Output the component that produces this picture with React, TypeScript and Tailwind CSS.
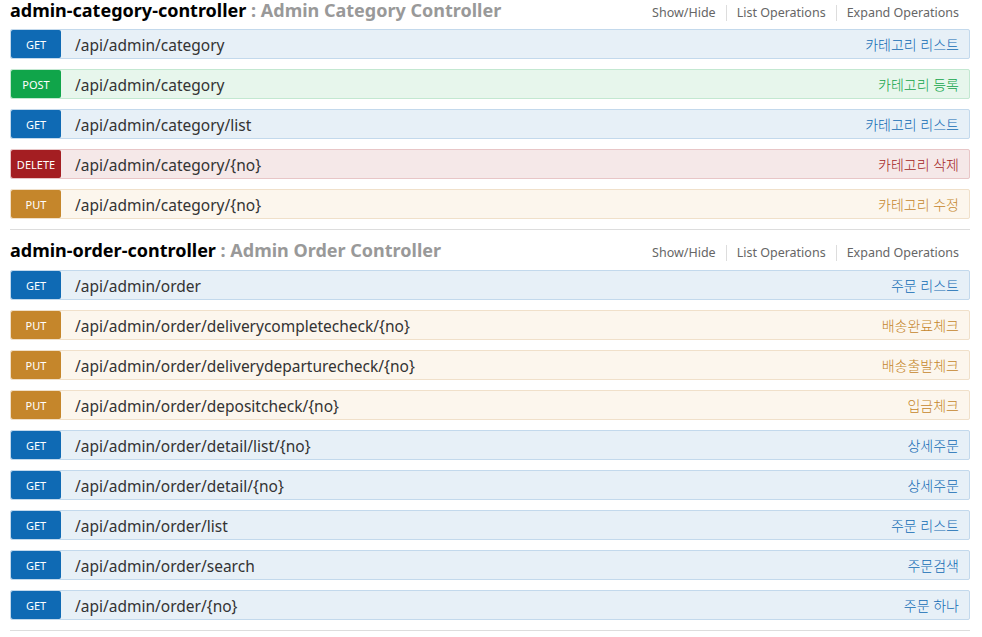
import React from 'react';

type Method = 'GET' | 'POST' | 'PUT' | 'DELETE';

const methodStyles: Record<Method, { row: string; badge: string; summary: string }> = {
  GET: { row: 'bg-[#e7f0f7] border-[#c3d9ec]', badge: 'bg-[#0f6ab4]', summary: 'text-[#0f6ab4]' },
  POST: { row: 'bg-[#e7f6ec] border-[#c3e8d1]', badge: 'bg-[#10a54a]', summary: 'text-[#10a54a]' },
  PUT: { row: 'bg-[#fcf6ed] border-[#f0e0ca]', badge: 'bg-[#c5862b]', summary: 'text-[#c5862b]' },
  DELETE: { row: 'bg-[#f5e8e8] border-[#e8c6c7]', badge: 'bg-[#a41e22]', summary: 'text-[#a41e22]' },
};

const sections: { name: string; desc: string; ops: [Method, string, string][] }[] = [
  {
    name: 'admin-category-controller',
    desc: 'Admin Category Controller',
    ops: [
      ['GET', '/api/admin/category', '카테고리 리스트'],
      ['POST', '/api/admin/category', '카테고리 등록'],
      ['GET', '/api/admin/category/list', '카테고리 리스트'],
      ['DELETE', '/api/admin/category/{no}', '카테고리 삭제'],
      ['PUT', '/api/admin/category/{no}', '카테고리 수정'],
    ],
  },
  {
    name: 'admin-order-controller',
    desc: 'Admin Order Controller',
    ops: [
      ['GET', '/api/admin/order', '주문 리스트'],
      ['PUT', '/api/admin/order/deliverycompletecheck/{no}', '배송완료체크'],
      ['PUT', '/api/admin/order/deliverydeparturecheck/{no}', '배송출발체크'],
      ['PUT', '/api/admin/order/depositcheck/{no}', '입금체크'],
      ['GET', '/api/admin/order/detail/list/{no}', '상세주문'],
      ['GET', '/api/admin/order/detail/{no}', '상세주문'],
      ['GET', '/api/admin/order/list', '주문 리스트'],
      ['GET', '/api/admin/order/search', '주문검색'],
      ['GET', '/api/admin/order/{no}', '주문 하나'],
    ],
  },
];

const Operation = ({ method, path, summary }: { method: Method; path: string; summary: string }) => {
  const s = methodStyles[method];
  return (
    <li className={`flex items-center h-[30px] border rounded-[2px] ${s.row}`}>
      <span className={`w-[50px] h-[28px] shrink-0 flex items-center justify-center pt-[2px] rounded-[2px] text-white text-[11px] ${s.badge}`}>
        {method}
      </span>
      <span className="pl-[14px] pt-[3px] text-[15.5px] text-[#333] flex-1">{path}</span>
      <span className={`pr-[10px] text-[14px] font-light ${s.summary}`}>{summary}</span>
    </li>
  );
};

export default function App() {
  return (
    <div
      className="bg-white w-[982px] h-[637px] overflow-hidden px-[10px]"
      style={{ fontFamily: '"Noto Sans", "Noto Sans CJK KR", sans-serif' }}
    >
      <div className="w-[960px]">
        {sections.map((sec, idx) => (
          <div key={sec.name} className="border-b border-[#ddd] pb-[10px]">
            <div className={`flex items-center justify-between ${idx === 0 ? 'h-[29px]' : 'h-[40px]'}`}>
              <h2
                className={`text-[18px] font-bold text-[#000] ${idx === 0 ? 'leading-[18px] -mt-[9px]' : 'leading-[22px]'}`}
              >
                {sec.name}
                <span className="text-[#999]"> : {sec.desc}</span>
              </h2>
              <ul className={`flex items-center text-[12.5px] text-[#666] pr-[11px] ${idx === 0 ? '-mt-[4px]' : 'mt-[6px]'}`}>
                <li className="px-[10px] border-r border-[#ddd] leading-[16px]">Show/Hide</li>
                <li className="px-[10px] border-r border-[#ddd] leading-[16px]">List Operations</li>
                <li className="pl-[10px] leading-[16px]">Expand Operations</li>
              </ul>
            </div>
            <ul className="flex flex-col gap-[10px]">
              {sec.ops.map(([m, p, s], i) => (
                <Operation key={i} method={m} path={p} summary={s} />
              ))}
            </ul>
          </div>
        ))}
      </div>
    </div>
  );
}
